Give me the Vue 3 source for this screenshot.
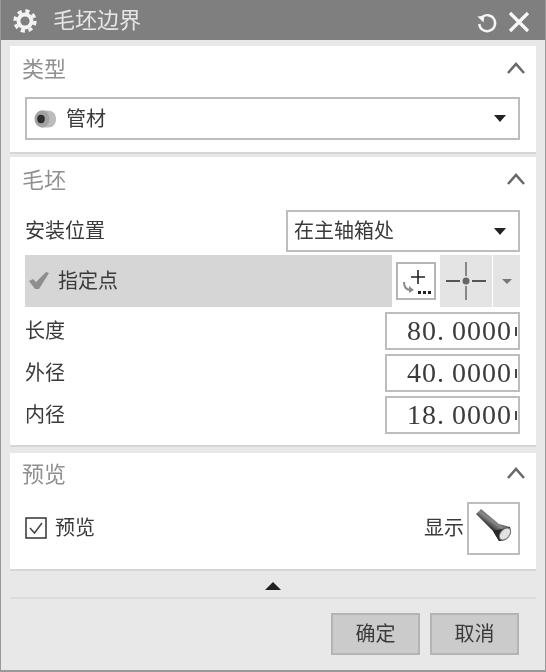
<script setup>
const fields = [
  { label: '长度', int: '80.', frac: '0000' },
  { label: '外径', int: '40.', frac: '0000' },
  { label: '内径', int: '18.', frac: '0000' }
]
</script>

<template>
  <div class="dialog">
    <div class="titlebar">
      <svg class="gear" width="24" height="24" viewBox="0 0 24 24">
        <circle cx="12" cy="12" r="8.500" fill="#f4f4f4" />
        <circle cx="12" cy="12" r="10" fill="none" stroke="#f4f4f4" stroke-width="3.400" stroke-dasharray="4.200 3.650" />
        <circle cx="12" cy="12" r="4.600" fill="#7f7f7f" />
      </svg>
      <span class="title">毛坯边界</span>
      <svg class="reset" width="24" height="24" viewBox="0 0 24 24">
        <path d="M6.500 7.500A8 8 0 1 1 4.200 14" fill="none" stroke="#f4f4f4" stroke-width="2.400" />
        <path d="M2.500 6.500l7-1-1 7z" fill="#f4f4f4" />
      </svg>
      <svg class="close" width="22" height="22" viewBox="0 0 22 22">
        <path d="M2 2l18 18M20 2L2 20" stroke="#f8f8f8" stroke-width="3.200" />
      </svg>
    </div>

    <div class="body">
      <section class="panel first">
        <div class="head">
          <span>类型</span>
          <svg width="20" height="12" viewBox="0 0 20 12"><path d="M2 11l8-9 8 9" fill="none" stroke="#6a6a6a" stroke-width="2.600" /></svg>
        </div>
        <div class="select wide">
          <svg width="24" height="20" viewBox="0 0 24 20">
            <path d="M8 1.500h7c5 0 8 3.500 8 8.500s-3 8.500-8 8.500H8z" fill="#bcbcbc" />
            <ellipse cx="9" cy="10" rx="7.500" ry="8.500" fill="#a2a2a2" />
            <ellipse cx="8" cy="10" rx="3.800" ry="4.200" fill="#2e2e2e" />
          </svg>
          <span class="sel-text">管材</span>
          <i class="caret"></i>
        </div>
      </section>

      <section class="panel second">
        <div class="head">
          <span>毛坯</span>
          <svg width="20" height="12" viewBox="0 0 20 12"><path d="M2 11l8-9 8 9" fill="none" stroke="#6a6a6a" stroke-width="2.600" /></svg>
        </div>
        <div class="row install">
          <span class="label">安装位置</span>
          <div class="select short">
            <span>在主轴箱处</span>
            <i class="caret"></i>
          </div>
        </div>
        <div class="point">
          <div class="point-label">
            <svg width="22" height="20" viewBox="0 0 22 20"><path d="M1 10l4-2 3 3L18 1l3 1-10 16H7z" fill="#8e8e8e" /></svg>
            <span>指定点</span>
          </div>
          <div class="point-btn">
            <svg width="36" height="34" viewBox="0 0 36 34">
              <path d="M20 6v14M13 13h14" stroke="#222" stroke-width="1.600" />
              <path d="M6 18c0 5 2 8 7 8" fill="none" stroke="#8a8a8a" stroke-width="2" />
              <path d="M11 22l5 4-5 3z" fill="#8a8a8a" />
              <path d="M20 27h3v3h-3zM25 27h3v3h-3zM30 27h3v3h-3z" fill="#222" />
            </svg>
          </div>
          <div class="point-cross">
            <svg width="52" height="52" viewBox="0 0 52 52">
              <path d="M26 7v14M26 31v14" stroke="#888" stroke-width="2" />
              <path d="M6 26h14M32 26h14" stroke="#555" stroke-width="2" />
              <circle cx="26" cy="26" r="3.500" fill="#666" />
            </svg>
          </div>
          <div class="point-drop"><i class="caret small"></i></div>
        </div>
        <div class="fields">
          <div class="row field" v-for="f in fields" :key="f.label">
            <span class="label">{{ f.label }}</span>
            <div class="input">
              <span class="int">{{ f.int }}</span><span>{{ f.frac }}</span>
              <i class="sliver"></i>
            </div>
          </div>
        </div>
      </section>

      <section class="panel third">
        <div class="head">
          <span>预览</span>
          <svg width="20" height="12" viewBox="0 0 20 12"><path d="M2 11l8-9 8 9" fill="none" stroke="#6a6a6a" stroke-width="2.600" /></svg>
        </div>
        <div class="row preview">
          <div class="check">
            <svg width="22" height="22" viewBox="0 0 22 22">
              <rect x="1" y="1" width="20" height="20" fill="#fff" stroke="#333" stroke-width="1.500" />
              <path d="M5 11l4.500 5L17 6" fill="none" stroke="#444" stroke-width="1.500" />
            </svg>
            <span class="label">预览</span>
          </div>
          <div class="show">
            <span class="label">显示</span>
            <div class="torch">
              <svg width="49" height="49" viewBox="0 0 49 49">
                <defs>
                  <linearGradient id="torchBody" gradientUnits="userSpaceOnUse" x1="16" y1="22" x2="25" y2="10">
                    <stop offset="0" stop-color="#1c1c1c" />
                    <stop offset="0.55" stop-color="#8a8a8a" />
                    <stop offset="1" stop-color="#4a4a4a" />
                  </linearGradient>
                </defs>
                <path d="M7 10l5-5 18 15 11 3 1 6-6 7-6 1-6-10z" fill="url(#torchBody)" />
                <path d="M24 27l6 10 6-1 6-7-1-6z" fill="#2a2a2a" />
                <ellipse cx="36" cy="30" rx="4.500" ry="7" transform="rotate(40 36 30)" fill="#e2e2e2" stroke="#777" />
              </svg>
            </div>
          </div>
        </div>
      </section>

      <div class="collapse"><i class="caret up"></i></div>
      <div class="footer">
        <button class="btn ok">确定</button>
        <button class="btn">取消</button>
      </div>
    </div>
  </div>
</template>

<style>
html, body {
  margin: 0;
  background: #e8e8e8;
}
</style>

<style scoped>
.dialog {
  width: 546px;
  height: 672px;
  box-sizing: border-box;
  border-bottom: 2px solid #999;
  border-left: 1px solid #999;
  border-right: 1px solid #999;
  display: flex;
  flex-direction: column;
  background: #e8e8e8;
  font-family: "Noto Sans CJK SC", "Liberation Sans", sans-serif;
  color: #333;
  overflow: hidden;
  filter: blur(0.4px);
}

.titlebar {
  height: 40px;
  margin: 0 -1px;
  flex: none;
  background: #7f7f7f;
  display: flex;
  align-items: center;
  padding: 0 16px 0 13px;
  color: #e6e6e6;
}
.title {
  font-size: 22px;
  line-height: 40px;
  margin-left: 16px;
  flex: 1;
  margin-top: -4px;
}
.gear { margin-top: 2px; }
.reset { margin: 3px 9px 0 0; }
.close { margin-top: 3px; }

.body {
  flex: 1;
  padding: 6px 9px 0;
  display: flex;
  flex-direction: column;
}

.panel {
  background: #fff;
  border-bottom: 2px solid #d6d6d6;
  padding: 0 16px 0 15px;
  box-sizing: border-box;
}
.first { height: 108px; margin-bottom: 3px; }
.second { height: 290px; margin-bottom: 6px; }
.third { height: 118px; }

.head {
  height: 44px;
  display: flex;
  align-items: center;
  justify-content: space-between;
  margin-left: -3px;
  margin-right: -6px;
  font-size: 22px;
  color: #909090;
}
.head span { margin-top: -2px; }
.third .head { height: 40px; }

.label {
  font-size: 20px;
  color: #3a3a3a;
  line-height: 28px;
  margin-top: -2px;
}

.select {
  border: 2px solid #bdbdbd;
  box-sizing: border-box;
  display: flex;
  align-items: center;
  font-size: 20px;
  background: #fff;
  color: #3a3a3a;
}
.select span {
  flex: 1;
  margin-top: -3px;
}
.wide {
  height: 43px;
  margin-top: 7px;
  padding: 0 12px 0 6px;
}
.sel-text { margin-left: 9px; }
.short {
  width: 234px;
  height: 42px;
  padding: 0 12px 0 6px;
}

.caret {
  width: 0;
  height: 0;
  border-left: 6px solid transparent;
  border-right: 6px solid transparent;
  border-top: 7px solid #222;
}
.caret.small {
  border-left-width: 5px;
  border-right-width: 5px;
  border-top: 5px solid #777;
}
.caret.up {
  border-top: 0;
  border-bottom: 8px solid #222;
  border-left-width: 8px;
  border-right-width: 8px;
}

.row {
  display: flex;
  align-items: center;
  justify-content: space-between;
}
.install { margin-top: 9px; }

.point {
  display: flex;
  align-items: center;
  height: 52px;
  margin-top: 3px;
}
.point-label {
  width: 367px;
  height: 52px;
  background: #d6d6d6;
  display: flex;
  align-items: center;
  box-sizing: border-box;
  padding-left: 3px;
  font-size: 20px;
  color: #3a3a3a;
}
.point-label span {
  margin-left: 8px;
  margin-top: -3px;
}
.point-btn {
  width: 40px;
  height: 38px;
  margin: 0 4px;
  box-sizing: border-box;
  border: 2px solid #b5b5b5;
  display: flex;
  align-items: center;
  justify-content: center;
  background: #fff;
}
.point-cross {
  width: 52px;
  height: 52px;
  background: #e4e4e4;
  margin-right: 1px;
}
.point-drop {
  width: 27px;
  height: 52px;
  background: #e4e4e4;
  display: flex;
  align-items: center;
  justify-content: center;
}

.fields {
  margin-top: 5px;
  display: flex;
  flex-direction: column;
  gap: 4px;
}
.input {
  width: 135px;
  height: 38px;
  box-sizing: border-box;
  border: 2px solid #bdbdbd;
  display: flex;
  align-items: center;
  padding-left: 20px;
  white-space: nowrap;
  font-family: "Liberation Serif", serif;
  font-size: 28px;
  letter-spacing: 1px;
  color: #3c3c3c;
}
.int { margin-right: 7px; }
.sliver {
  width: 2px;
  height: 9px;
  margin-left: 3px;
  background: #444;
}

.preview {
  margin-top: 9px;
  height: 52px;
}
.check, .show {
  display: flex;
  align-items: center;
}
.check .label { margin-left: 8px; }
.show .label { margin-right: 3px; }
.torch {
  width: 53px;
  height: 53px;
  box-sizing: border-box;
  border: 2px solid #bdbdbd;
  display: flex;
  align-items: center;
  justify-content: center;
}

.collapse {
  padding-top: 3px;
  height: 23px;
  display: flex;
  align-items: center;
  justify-content: center;
  border-bottom: 2px solid #dcdcdc;
}
.footer {
  display: flex;
  justify-content: flex-end;
  gap: 10px;
  padding: 14px 17px 0 0;
}
.btn {
  width: 89px;
  height: 42px;
  border: 2px solid #b4b4b4;
  background: #cbcbcb;
  font-family: inherit;
  font-size: 20px;
  color: #3a3a3a;
  padding: 0 0 4px;
}
</style>
